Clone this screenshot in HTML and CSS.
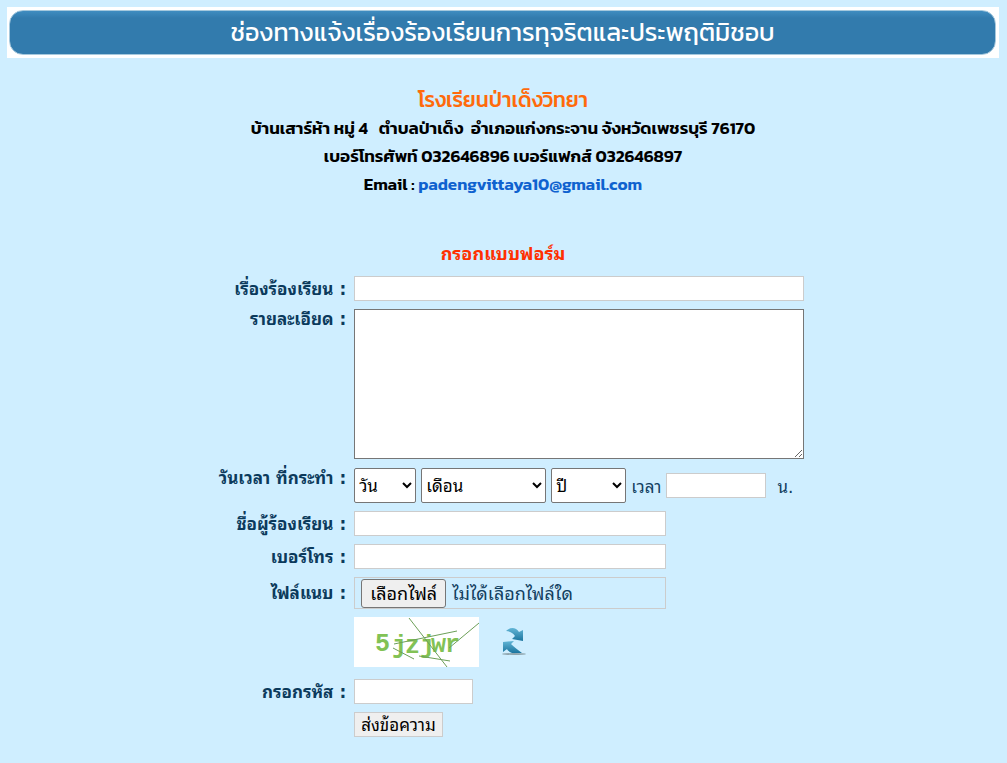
FILE: index.html
```html
<!DOCTYPE html>
<html lang="th">
<head>
<meta charset="UTF-8">
<meta name="viewport" content="width=device-width, initial-scale=1.0">
<title>ช่องทางแจ้งเรื่องร้องเรียนการทุจริตและประพฤติมิชอบ</title>
<link rel="stylesheet" href="styles.css">
</head>
<body>
    <header class="banner">
        <h1 class="bannerTitle">ช่องทางแจ้งเรื่องร้องเรียนการทุจริตและประพฤติมิชอบ</h1>
    </header>

    <div class="school">
        <h2 class="schoolName">โรงเรียนป่าเด็งวิทยา</h2>
        <p>บ้านเสาร์ห้า หมู่ 4 &nbsp; ตำบลป่าเด็ง &nbsp;อำเภอแก่งกระจาน จังหวัดเพชรบุรี 76170</p>
        <p>เบอร์โทรศัพท์ 032646896 เบอร์แฟกส์ 032646897</p>
        <p>Email : <a href="mailto:padengvittaya10@gmail.com">padengvittaya10@gmail.com</a></p>
    </div>

    <form class="complaintForm">
        <h3 class="formTitle">กรอกแบบฟอร์ม</h3>

        <div class="row">
            <label class="rowLabel" for="subject">เรื่องร้องเรียน :</label>
            <div class="field"><input type="text" id="subject" class="textBox wide"></div>
        </div>
        <div class="row top">
            <label class="rowLabel" for="detail">รายละเอียด :</label>
            <div class="field"><textarea id="detail" class="detail"></textarea></div>
        </div>
        <div class="row top">
            <label class="rowLabel" for="day">วันเวลา ที่กระทำ :</label>
            <div class="field dateField">
                <select id="day" class="day"><option>วัน</option></select>
                <select class="month" aria-label="เดือน"><option>เดือน</option></select>
                <select class="year" aria-label="ปี"><option>ปี</option></select>
                <label for="time">เวลา</label>
                <input type="text" id="time" class="textBox time">
                <span class="unit">น.</span>
            </div>
        </div>
        <div class="row">
            <label class="rowLabel" for="fullname">ชื่อผู้ร้องเรียน :</label>
            <div class="field"><input type="text" id="fullname" class="textBox medium"></div>
        </div>
        <div class="row">
            <label class="rowLabel" for="phone">เบอร์โทร :</label>
            <div class="field"><input type="text" id="phone" class="textBox medium"></div>
        </div>
        <div class="row">
            <label class="rowLabel" for="attach">ไฟล์แนบ :</label>
            <div class="field">
                <div class="fileBox">
                    <input type="file" id="attach" class="fileInput">
                    <label class="fileButton" for="attach">เลือกไฟล์</label>
                    <span>ไม่ได้เลือกไฟล์ใด</span>
                </div>
            </div>
        </div>
        <div class="row captchaRow">
            <div class="field captcha">
                <svg class="captchaImage" width="125" height="50" viewBox="0 0 125 50">
                    <rect width="125" height="50" fill="#fff"/>
                    <text x="21 38 51 66 77 91" y="34 36 36 36 35 35" fill="#82c255" font-family="Liberation Mono, monospace" font-weight="bold" font-size="25">5jzjwr</text>
                    <g fill="none" stroke="#6c9f58" stroke-width="1">
                        <path d="M55 1L93 50"/>
                        <path d="M40 27L103 14"/>
                        <path d="M39 31L60 42"/>
                        <path d="M65 39L96 44"/>
                        <path d="M95 31L125 6"/>
                    </g>
                </svg>
                <button type="button" class="refresh" aria-label="เปลี่ยนรหัส">
                    <svg width="26" height="30" viewBox="0 0 26 30">
                        <defs>
                            <linearGradient id="arrowBlue" x1="0" y1="0" x2="0" y2="1">
                                <stop offset="0" stop-color="#62b5d6"/>
                                <stop offset="1" stop-color="#1c759f"/>
                            </linearGradient>
                        </defs>
                        <ellipse cx="13" cy="27" rx="12" ry="1" fill="#8fa5ae"/>
                        <path d="M5 4C9 0 15 0 18 5L22 3L22 14L11 12L14 9C12 6 9 4 5 4Z" fill="url(#arrowBlue)"/>
                        <path d="M2 15L13 14L10 17C13 20 17 23 21 26L11 26C9 25 7 24 6 22L2 25Z" fill="url(#arrowBlue)"/>
                    </svg>
                </button>
            </div>
        </div>
        <div class="row">
            <label class="rowLabel" for="code">กรอกรหัส :</label>
            <div class="field"><input type="text" id="code" class="textBox code"></div>
        </div>
        <div class="row">
            <div class="field"><button type="submit" class="send">ส่งข้อความ</button></div>
        </div>
    </form>
</body>
</html>
```
FILE: styles.css
```css
body {
    margin: 7px 8px 24px 7px;
    background-color: #cfeeff;
    font-family: Tahoma, "DejaVu Sans", "Noto Sans Thai Looped", Loma, sans-serif;
    font-size: 17px;
    color: #123f5f;
}

.banner {
    padding: 3px 3px 3px 2px;
    background-color: #fff;
}

.bannerTitle {
    margin: 0;
    border: 1px solid #a5c8dd;
    border-radius: 14px;
    background: linear-gradient(#3f8cc0, #327bad 7px);
    color: #fff;
    font-family: Kanit, "Noto Sans Thai", sans-serif;
    font-size: 25px;
    font-weight: normal;
    line-height: 43px;
    text-align: center;
}

.school {
    padding-top: 27px;
    font-family: Kanit, "Noto Sans Thai", "Open Sans", sans-serif;
    font-size: 17px;
    font-weight: 600;
    line-height: 28px;
    text-align: center;
    color: #000;
}

.school p {
    margin: 0;
}

.school a {
    color: #0f62cf;
    text-decoration: none;
}

.schoolName {
    margin: 0;
    font-size: 21px;
    font-weight: 500;
    line-height: 29px;
    color: #ff6a0b;
}

.formTitle {
    margin: 43px 0 2px;
    font-size: 18px;
    line-height: 25px;
    text-align: center;
    color: #ff3000;
}

.complaintForm {
    display: flex;
    flex-direction: column;
    gap: 8px;
}

.row {
    display: grid;
    grid-template-columns: 35% 1fr;
    align-items: center;
}

.row.top {
    align-items: start;
}

.rowLabel {
    padding-right: 8px;
    font-weight: bold;
    line-height: 20px;
    text-align: right;
    color: #0b3a5c;
}

.field {
    display: flex;
    grid-column: 2;
    align-items: center;
}

.textBox {
    box-sizing: border-box;
    height: 25px;
    border: 1px solid #ccc;
    background-color: #fff;
    font: inherit;
}

.wide {
    width: 450px;
}

.medium {
    width: 312px;
}

.time {
    width: 100px;
}

.code {
    width: 119px;
}

.detail {
    box-sizing: border-box;
    width: 450px;
    height: 150px;
    margin-bottom: 1px;
    border: 1px solid #767676;
    font: inherit;
}

.dateField {
    gap: 5px;
}

select {
    height: 35px;
    border: 1px solid #767676;
    border-radius: 2px;
    background-color: #fff;
    color: #000;
    font: inherit;
}

.day {
    width: 62px;
}

.month {
    width: 125px;
}

.year {
    width: 75px;
}

.unit {
    margin-left: 6px;
}

.fileBox {
    display: flex;
    box-sizing: border-box;
    align-items: center;
    gap: 6px;
    width: 312px;
    height: 32px;
    padding-left: 6px;
    border: 1px solid #ccc;
    font-size: 18px;
    line-height: 27px;
}

/* the native file text follows the browser language, so it is hidden */
.fileInput {
    position: absolute;
    width: 85px;
    height: 28px;
    opacity: 0;
}

.fileButton {
    box-sizing: border-box;
    width: 85px;
    height: 29px;
    border: 1px solid #767676;
    border-radius: 3px;
    background-color: #efefef;
    color: #000;
    text-align: center;
}

.captchaRow {
    height: 54px;
    align-items: start;
}

.captcha {
    gap: 22px;
}

.refresh {
    display: flex;
    padding: 0;
    border: none;
    background: none;
    cursor: pointer;
}

.send {
    height: 25px;
    padding: 0 6px;
    border: 1px solid #ccc;
    background-color: #efefef;
    color: #000;
    font: inherit;
    line-height: 20px;
}
```
